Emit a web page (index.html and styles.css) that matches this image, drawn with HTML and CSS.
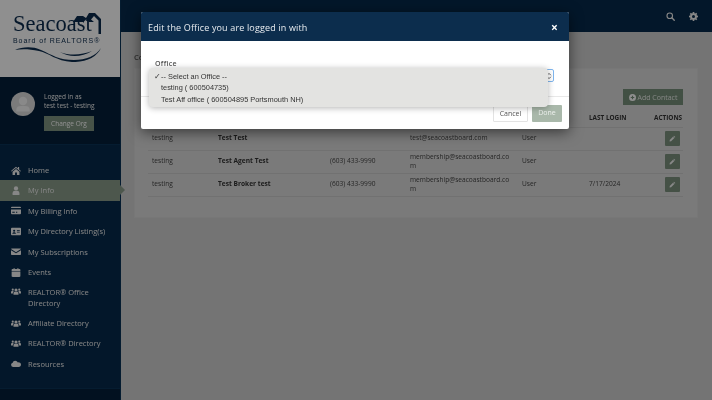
FILE: index.html
```html
<!DOCTYPE html>
<html lang="en">
<head>
<meta charset="utf-8">
<title>Edit Office</title>
<link rel="stylesheet" href="styles.css">
</head>
<body>
<svg class="defs" width="0" height="0" aria-hidden="true">
  <symbol id="i-home" viewBox="0 0 16 14"><path d="M8 1 0 7.600l.9 1L8 3l7.100 5.600.9-1L13 5.200V1.500h-2v2.100zM2.500 9v5h4V10h3v4h4V9L8 4.500z"/></symbol>
  <symbol id="i-user" viewBox="0 0 16 14"><circle cx="8" cy="3.600" r="3.400"/><path d="M2.500 14v-2.500C2.500 8.800 4.500 7.500 6 7.500h4c1.500 0 3.500 1.300 3.500 4V14z"/></symbol>
  <symbol id="i-card" viewBox="0 0 16 14"><path d="M1.500 1h13A1.500 1.500 0 0 1 16 2.500V3H0v-.5A1.500 1.500 0 0 1 1.500 1zM0 5.500h16v6A1.500 1.500 0 0 1 14.500 13h-13A1.500 1.500 0 0 1 0 11.500zM2 9v1.500h4V9zm6 0v1.500h2V9z" fill-rule="evenodd"/></symbol>
  <symbol id="i-id" viewBox="0 0 16 14"><path d="M1.500 1h13A1.500 1.500 0 0 1 16 2.500v9a1.500 1.500 0 0 1-1.500 1.500h-13A1.500 1.500 0 0 1 0 11.500v-9A1.500 1.500 0 0 1 1.500 1zM5 4a1.700 1.700 0 1 0 0 3.400A1.700 1.700 0 0 0 5 4zM2.200 10.500h5.600C7.800 8.800 6.500 8 5 8s-2.800.8-2.800 2.500zM9.500 5v1H14V5zm0 2.500v1H14v-1z" fill-rule="evenodd"/></symbol>
  <symbol id="i-mail" viewBox="0 0 16 14"><path d="M1.200 2h13.600c.7 0 1.200.5 1.200 1.100L8 8.300 0 3.100C0 2.500.5 2 1.200 2zM0 4.800l8 5 8-5v6.400c0 .7-.5 1.200-1.200 1.200H1.200C.5 12.400 0 11.900 0 11.200z"/></symbol>
  <symbol id="i-cal" viewBox="0 0 16 14"><path d="M4 0h2v1.500h4V0h2v1.500h1.500c.8 0 1.500.7 1.500 1.500v1.500H1V3c0-.8.7-1.500 1.500-1.500H4zM1 5.500h14v7c0 .8-.7 1.500-1.500 1.500h-11c-.8 0-1.500-.7-1.500-1.500z"/></symbol>
  <symbol id="i-users" viewBox="0 0 16 14"><circle cx="8" cy="4.500" r="2.500"/><circle cx="2.800" cy="4" r="1.700"/><circle cx="13.200" cy="4" r="1.700"/><path d="M4 12V9.800C4 8.300 5.200 7.500 6.300 7.500h3.400c1.100 0 2.300.8 2.300 2.300V12zM0 10V8.200C0 7 .9 6.300 1.800 6.300h1.900c.3 0 .6.100.8.300C3.500 7.300 3.100 8.300 3.100 10zM16 10V8.200C16 7 15.100 6.300 14.200 6.300h-1.900c-.3 0-.6.100-.8.300 1 .7 1.400 1.700 1.400 3.400z"/></symbol>
  <symbol id="i-cloud" viewBox="0 0 16 14"><path d="M3.500 12.500a3.400 3.400 0 0 1-.8-6.700 4 4 0 0 1 4-3.300 4.700 4.700 0 0 1 4.300 2.700 3.700 3.700 0 0 1 5 3.500c0 2.100-1.500 3.800-3.600 3.800z"/></symbol>
  <symbol id="i-pencil" viewBox="0 0 12 12"><path d="M8.500 1.200 10.800 3.500 9.800 4.500 7.500 2.200zM6.800 2.900 9.100 5.200 3.600 10.700 1 11l.3-2.600z"/></symbol>
</svg>

<div class="app">
  <aside class="sidebar">
    <div class="brand">
      <div class="logo">
        <svg class="logo-roof" viewBox="0 0 30 21"><path d="M0 9 4 3h6l3 2 3-5h6l6 6v15h-2.500V7.500L21 3l-3 3.500 3 2.500h-5l-3-2.500L10.500 9z"/></svg>
        <div class="logo-name">Seacoast</div>
        <div class="logo-sub">Board of REALTORS®</div>
        <svg class="logo-wave" viewBox="0 0 90 17"><path d="M1 5C8 2 18 1 27 5c11 5 18 10 33 10 12 0 22-4 27-12-4 9-15 14.500-29 14C42 16 35 8 25 6 15 4 8 4 1 5z"/><path d="M46 7c10 4 22 3 32-1-10 6-22 7-32 1z"/></svg>
      </div>
    </div>
    <div class="profile">
      <div class="avatar"><svg viewBox="0 0 16 16"><circle cx="8" cy="6" r="2.800"/><path d="M3.500 13v-1.200C3.500 10 5 9.300 6.500 9.300h3c1.500 0 3 .7 3 2.500V13z"/></svg></div>
      <div class="who">
        <div class="who-line">Logged in as</div>
        <div class="who-line">test test - testing</div>
        <div class="org-btn">Change Org</div>
      </div>
    </div>
    <nav class="nav">
      <a class="nav-item"><svg class="nav-icon"><use href="#i-home"/></svg><span>Home</span></a>
      <a class="nav-item active"><svg class="nav-icon"><use href="#i-user"/></svg><span>My Info</span></a>
      <a class="nav-item"><svg class="nav-icon"><use href="#i-card"/></svg><span>My Billing Info</span></a>
      <a class="nav-item"><svg class="nav-icon"><use href="#i-id"/></svg><span>My Directory Listing(s)</span></a>
      <a class="nav-item"><svg class="nav-icon"><use href="#i-mail"/></svg><span>My Subscriptions</span></a>
      <a class="nav-item"><svg class="nav-icon"><use href="#i-cal"/></svg><span>Events</span></a>
      <a class="nav-item top"><svg class="nav-icon"><use href="#i-users"/></svg><span>REALTOR® Office Directory</span></a>
      <a class="nav-item"><svg class="nav-icon"><use href="#i-users"/></svg><span>Affiliate Directory</span></a>
      <a class="nav-item"><svg class="nav-icon"><use href="#i-users"/></svg><span>REALTOR® Directory</span></a>
      <a class="nav-item"><svg class="nav-icon"><use href="#i-cloud"/></svg><span>Resources</span></a>
    </nav>
    <div class="side-foot"></div>
  </aside>

  <div class="main">
    <header class="topbar">
      <svg class="top-icon" viewBox="0 0 12 12"><circle cx="5" cy="5" r="3.700" fill="none" stroke="currentColor" stroke-width="1.500"/><path d="M7.800 7.800 11 11" stroke="currentColor" stroke-width="1.800" stroke-linecap="round"/></svg>
      <svg class="top-icon" viewBox="0 0 12 12"><path fill-rule="evenodd" d="M5 0h2l.3 1.600 1 .4L9.700 1 11 2.500l-1 1.200.5 1L12 5v2l-1.600.3-.4 1 1 1.200L9.500 11l-1.200-1-1 .4L7 12H5l-.3-1.600-1-.4-1.200 1L1 9.500l1-1.200-.5-1L0 7V5l1.600-.3.400-1-1-1.200L2.500 1l1.200 1 1-.4zM6 4a2 2 0 1 0 0 4 2 2 0 0 0 0-4z"/></svg>
    </header>
    <div class="content">
      <h1 class="page-title">Contacts</h1>
      <section class="card">
        <div class="card-tools"><a class="add-btn"><svg viewBox="0 0 12 12"><path fill-rule="evenodd" d="M6 0a6 6 0 1 1 0 12A6 6 0 0 1 6 0zM5 3v2H3v2h2v2h2V7h2V5H7V3z"/></svg>Add Contact</a></div>
        <table class="grid">
          <thead>
            <tr><th class="c-org">OFFICE</th><th class="c-name">NAME</th><th class="c-phone">PHONE</th><th class="c-mail">EMAIL</th><th class="c-role">ROLE</th><th class="c-last">LAST LOGIN</th><th class="c-act">ACTIONS</th></tr>
          </thead>
          <tbody>
            <tr><td>testing</td><td class="strong">Test Test</td><td></td><td>test@seacoastboard.com</td><td>User</td><td></td><td class="act"><a class="edit"><svg><use href="#i-pencil"/></svg></a></td></tr>
            <tr><td>testing</td><td class="strong">Test Agent Test</td><td>(603) 433-9990</td><td class="wrap">membership@seacoastboard.com</td><td>User</td><td></td><td class="act"><a class="edit"><svg><use href="#i-pencil"/></svg></a></td></tr>
            <tr><td>testing</td><td class="strong">Test Broker test</td><td>(603) 433-9990</td><td class="wrap">membership@seacoastboard.com</td><td>User</td><td>7/17/2024</td><td class="act"><a class="edit"><svg><use href="#i-pencil"/></svg></a></td></tr>
          </tbody>
        </table>
      </section>
    </div>
  </div>
</div>

<div class="backdrop"></div>

<div class="modal">
  <div class="modal-head"><span>Edit the Office you are logged in with</span><span class="close">×</span></div>
  <div class="modal-body">
    <div class="label">Office</div>
    <div class="select"><svg viewBox="0 0 8 10"><path d="M1.500 4 4 1.500 6.500 4M1.500 6 4 8.500 6.500 6" fill="none" stroke="currentColor" stroke-width="1.200"/></svg></div>
  </div>
  <div class="modal-foot"><a class="btn-cancel">Cancel</a><a class="btn-done">Done</a></div>
  <ul class="popup">
    <li class="sel"><span class="tick">✓</span>-- Select an Office --</li>
    <li>testing ( 600504735)</li>
    <li>Test Aff office ( 600504895 Portsmouth NH)</li>
  </ul>
</div>
</body>
</html>
```
FILE: styles.css
```css
* { box-sizing: border-box; }
html, body { margin: 0; height: 100%; }
body { width: 712px; height: 400px; overflow: hidden; font-family: "Open Sans", sans-serif; font-size: 7.5px; color: #555; background: #cfcfcf; position: relative; filter: blur(.3px); }
.defs { position: absolute; }
.app { display: flex; height: 400px; will-change: transform; }

.sidebar { width: 121px; flex: none; display: flex; flex-direction: column; background: #072a4b; color: #f4f4f4; border-right: 1px solid #0a3357; }
.brand { height: 77px; background: #fff; flex: none; padding: 13px 0 0 13px; }
.logo { position: relative; width: 90px; color: #0b2b4d; }
.logo-name { font-family: "Liberation Serif", serif; font-size: 22.500px; line-height: 22px; color: #0b2b4d; }
.logo-sub { font-family: "Liberation Sans", sans-serif; font-size: 7px; line-height: 8px; letter-spacing: .92px; color: #0b2b4d; margin-top: 2px; white-space: nowrap; }
.logo-roof { position: absolute; left: 60px; top: 0; width: 30px; height: 21px; fill: #0b2b4d; }
.logo-wave { display: block; width: 90px; height: 17px; margin: 0 0 0 1px; fill: #0b2b4d; }

.profile { height: 68px; flex: none; display: flex; gap: 9px; padding: 15px 0 0 11px; background: #041f39; border-bottom: 1px solid #0a3357; }
.avatar { width: 24px; height: 24px; border-radius: 50%; background: #dcdcdc; overflow: hidden; flex: none; }
.avatar svg { display: block; width: 24px; height: 24px; fill: #f4f4f4; }
.who-line { font-size: 6.500px; line-height: 9px; color: #f2f2f2; white-space: nowrap; }
.org-btn { margin-top: 6px; width: 50px; height: 15px; line-height: 15px; background: #7f9480; color: #fff; font-size: 6.500px; text-align: center; white-space: nowrap; }

.nav { flex: 1; padding-top: 15px; display: flex; flex-direction: column; }
.nav-item { position: relative; display: flex; align-items: center; padding: 5.100px 6px 5.100px 11px; gap: 7px; color: #ececec; font-size: 7.500px; line-height: 10.200px; }
.nav-item.top { align-items: flex-start; }
.nav-icon { width: 10px; height: 9px; fill: #f0f0f0; flex: none; }
.nav-item.active { background: #8a9c8a; }
.nav-item.active::after { content: ""; position: absolute; right: -5px; top: 5px; border-left: 5px solid #8a9c8a; border-top: 5px solid transparent; border-bottom: 5px solid transparent; }
.side-foot { height: 12px; flex: none; background: #041f39; border-top: 1px solid #0a3357; }

.main { flex: 1; min-width: 0; display: flex; flex-direction: column; }
.topbar { height: 32px; flex: none; background: #072a4b; display: flex; justify-content: flex-end; align-items: center; gap: 14px; padding: 1px 14px 0 0; color: #f0f0f0; fill: #f0f0f0; }
.top-icon { width: 9px; height: 9px; }
.content { flex: 1; padding: 20px 14px 0 13px; background: #cfcfcf; }
.page-title { margin: 0 0 6px; font-size: 7.500px; line-height: 10px; font-weight: 600; color: #555; }
.card { height: 150px; background: #dadada; border: 1px solid #d4d4d4; padding: 20px 14px 0 13px; }
.card-tools { display: flex; justify-content: flex-end; height: 22px; }
.add-btn { display: flex; align-items: center; justify-content: center; gap: 2px; width: 60px; height: 16px; background: #778f7a; color: #e8ece8; font-size: 7px; white-space: nowrap; }
.add-btn svg { width: 7px; height: 7px; fill: #fff; }

.grid { width: 535px; table-layout: fixed; border-collapse: collapse; font-size: 6.600px; color: #444; }
.grid th { height: 16px; padding: 0 0 2px 4px; text-align: left; font-size: 6.400px; font-weight: 700; color: #333; white-space: nowrap; border-bottom: 1px solid #cacaca; }
.grid td { height: 23px; padding: 0 4px; border-bottom: 1px solid #cacaca; vertical-align: middle; line-height: 8.500px; }
.c-org { width: 66px; } .c-name { width: 112px; } .c-phone { width: 80px; } .c-mail { width: 112px; } .c-role { width: 67px; } .c-last { width: 65px; } .c-act { width: 33px; }
.grid th.c-org, .grid th.c-name, .grid th.c-phone, .grid th.c-mail, .grid th.c-role { color: transparent; }
.strong { font-weight: 700; color: #333; }
.wrap { word-break: break-all; }
.grid td.act { padding: 0 3px 0 0; text-align: right; }
.edit { display: inline-flex; align-items: center; justify-content: center; width: 15px; height: 15px; vertical-align: middle; background: #7b917d; border-radius: 1px; }
.edit svg { width: 7px; height: 7px; fill: #f2f2f2; }

.backdrop { position: absolute; inset: 0; background: rgba(0, 0, 0, .44); }

.modal { position: absolute; left: 141px; top: 12px; width: 428px; height: 117px; background: #fff; border-radius: 2px; box-shadow: 0 3px 14px rgba(0, 0, 0, .55); display: flex; flex-direction: column; will-change: transform; }
.modal-head { height: 29px; flex: none; display: flex; justify-content: space-between; align-items: center; padding: 2px 11px 0 7px; background: #0c2d4d; color: #e8ecf0; font-size: 9px; letter-spacing: .15px; border-radius: 2px 2px 0 0; }
.close { font-size: 12px; font-weight: 700; color: #fff; }
.modal-body { height: 56px; flex: none; padding: 18px 15px 0 14px; border-bottom: 1px solid #e8e8e8; }
.label { font-size: 7px; line-height: 10px; font-weight: 600; color: #555; letter-spacing: .3px; }
.select { display: flex; justify-content: flex-end; align-items: center; height: 13px; padding-right: 1px; border: 1px solid #7fb6ee; border-radius: 2px; color: #555; }
.select svg { width: 6px; height: 8px; }
.modal-foot { flex: 1; display: flex; justify-content: flex-end; align-items: flex-start; gap: 4px; padding: 8px 7px 0 0; }
.btn-cancel, .btn-done { height: 17px; line-height: 16px; text-align: center; font-size: 7px; border-radius: 1px; }
.btn-cancel { width: 35px; background: #fff; color: #555; border: 1px solid #e3e3e3; }
.btn-done { width: 30px; background: #a9b8aa; color: #eef1ee; }

.popup { position: absolute; left: 8px; top: 56px; width: 399px; height: 39px; margin: 0; padding: 3px 0 0 12px; list-style: none; background: #e3e3e1; border-radius: 4px; box-shadow: 0 1px 6px rgba(0, 0, 0, .3); font-family: "Liberation Sans", sans-serif; font-size: 7.400px; line-height: 11.300px; color: #333; }
.popup li { white-space: nowrap; }
.popup .sel { position: relative; }
.tick { position: absolute; left: -7px; top: 0; font-family: "DejaVu Sans", sans-serif; font-size: 8px; }
```
